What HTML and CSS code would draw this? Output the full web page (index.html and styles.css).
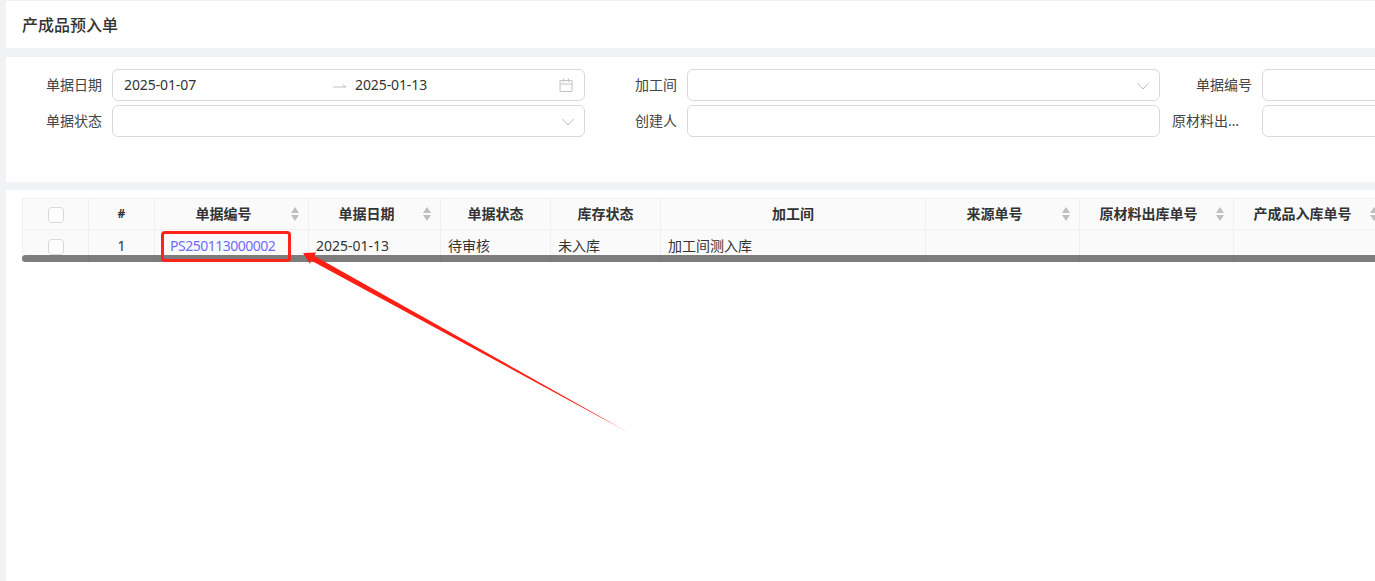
FILE: index.html
```html
<!DOCTYPE html>
<html lang="zh-CN">
<head>
<meta charset="utf-8">
<title>产成品预入单</title>
<link rel="stylesheet" href="styles.css">
</head>
<body>
<main class="page">
  <header class="card title-card"><h1 class="title">产成品预入单</h1></header>
  <section class="card filter-card">
    <form class="filter-grid">
      <div class="field">
        <label class="field-label">单据日期</label>
        <div class="control date-range">
          <span class="date-value">2025-01-07</span>
          <svg class="range-arrow" viewBox="0 0 14 6" width="14" height="6"><path d="M0 4h13L9.500 1.500" fill="none" stroke="#bfbfbf" stroke-width="1"/></svg>
          <span class="date-value">2025-01-13</span>
          <svg class="calendar" viewBox="0 0 14 14" width="14" height="14"><path d="M1 2.500h12v11H1zM1 6h12M4.500 .5v3.500M9.500 .5v3.500" fill="none" stroke="#c4c4c4" stroke-width="1"/></svg>
        </div>
      </div>
      <div class="field">
        <label class="field-label">加工间</label>
        <div class="control select">
          <svg class="chevron" viewBox="0 0 12 8" width="12" height="8"><path d="M.5 1l5.500 6 5.500-6" fill="none" stroke="#bfbfbf" stroke-width="1"/></svg>
        </div>
      </div>
      <div class="field">
        <label class="field-label">单据编号</label>
        <div class="control"></div>
      </div>
      <div class="field">
        <label class="field-label">单据状态</label>
        <div class="control select">
          <svg class="chevron" viewBox="0 0 12 8" width="12" height="8"><path d="M.5 1l5.500 6 5.500-6" fill="none" stroke="#bfbfbf" stroke-width="1"/></svg>
        </div>
      </div>
      <div class="field">
        <label class="field-label">创建人</label>
        <div class="control"></div>
      </div>
      <div class="field">
        <label class="field-label">原材料出库单号</label>
        <div class="control"></div>
      </div>
    </form>
  </section>
  <section class="card table-card">
    <div class="table-wrap">
      <table class="grid-table">
        <colgroup>
          <col class="w66"><col class="w66"><col class="w154"><col class="w132"><col class="w110"><col class="w110"><col class="w265"><col class="w154"><col class="w154"><col class="w154">
        </colgroup>
        <thead>
          <tr>
            <th><span class="checkbox"></span></th>
            <th class="hash">#</th>
            <th class="sortable">单据编号<span class="sorter"></span></th>
            <th class="sortable">单据日期<span class="sorter"></span></th>
            <th>单据状态</th>
            <th>库存状态</th>
            <th>加工间</th>
            <th class="sortable">来源单号<span class="sorter"></span></th>
            <th class="sortable">原材料出库单号<span class="sorter"></span></th>
            <th class="sortable">产成品入库单号<span class="sorter"></span></th>
          </tr>
        </thead>
        <tbody>
          <tr>
            <td class="center"><span class="checkbox"></span></td>
            <td class="center">1</td>
            <td class="link-cell"><a class="doc-link">PS250113000002</a></td>
            <td>2025-01-13</td>
            <td>待审核</td>
            <td>未入库</td>
            <td>加工间测入库</td>
            <td></td>
            <td></td>
            <td></td>
          </tr>
        </tbody>
      </table>
      <div class="scrollbar"></div>
    </div>
  </section>
</main>
<div class="highlight-box"></div>
<svg class="annotation" viewBox="0 0 1375 581" width="1375" height="581">
  <defs>
    <linearGradient id="fade" gradientUnits="userSpaceOnUse" x1="303" y1="253" x2="633" y2="435">
      <stop offset="0" stop-color="#ff1f14"/>
      <stop offset=".9" stop-color="#ff1f14"/>
      <stop offset="1" stop-color="#ff1f14" stop-opacity=".15"/>
    </linearGradient>
  </defs>
  <polygon points="303,253 316,252.500 314.500,256 633,435 311,260.500 310,264" fill="url(#fade)"/>
</svg>
</body>
</html>
```
FILE: styles.css
```css
* { box-sizing: border-box; }
html, body { margin: 0; height: 100%; overflow: hidden; }
body {
  background: #f0f2f5;
  color: #333;
  font-family: "Noto Sans", "Noto Sans CJK SC", sans-serif;
  font-size: 14px;
}
.page {
  height: 581px;
  padding: 1px 0 0 6px;
  display: flex;
  flex-direction: column;
  gap: 9px;
  overflow: hidden;
}
.card { background: #fff; overflow: hidden; flex: none; }
.title-card { height: 47px; padding-left: 16px; display: flex; align-items: center; }
.title { margin: 0; font-size: 16px; font-weight: 500; line-height: 22px; color: #333; }
.filter-card { height: 125px; padding: 12px 0 0 4px; margin-bottom: -1px; }
.filter-grid {
  display: grid;
  grid-template-columns: repeat(3, 575px);
  grid-auto-rows: 32px;
  row-gap: 4px;
  width: 1725px;
}
.field { display: flex; align-items: center; gap: 10px; }
.field-label {
  flex: none;
  width: 92px;
  padding-left: 12px;
  padding-bottom: 2px;
  text-align: right;
  white-space: nowrap;
  overflow: hidden;
  text-overflow: ellipsis;
  color: #444;
}
.control {
  width: 473px;
  height: 32px;
  border: 1px solid #d9d9d9;
  border-radius: 6px;
  background: #fff;
  display: flex;
  align-items: center;
  padding: 0 11px;
}
.select { justify-content: flex-end; }
.date-range { padding: 0 12px 0 11px; }
.date-value { flex: none; width: 201px; color: #333; line-height: 22px; letter-spacing: -.1px; }
.range-arrow { flex: none; margin: 2px 8px 0; }
.calendar { flex: none; margin-left: 3px; }
.chevron { display: block; margin: 2px -1px 0 0; }
.table-card { flex: 1; padding: 8px 0 0 16px; }
.table-wrap { position: relative; overflow: hidden; width: 1353px; height: 64px; }
.grid-table {
  table-layout: fixed;
  width: 1365px;
  border-collapse: separate;
  border-spacing: 0;
  border-top: 1px solid #f0f0f0;
  border-left: 1px solid #f0f0f0;
  background: #fafafa;
}
.w66 { width: 66px; }
.w110 { width: 110px; }
.w132 { width: 132px; }
.w154 { width: 154px; }
.w265 { width: 265px; }
.grid-table th, .grid-table td {
  border-right: 1px solid #f0f0f0;
  border-bottom: 1px solid #f0f0f0;
  padding: 0 7px;
  white-space: nowrap;
  font-size: 14px;
}
.grid-table th {
  height: 31px;
  padding-bottom: 2px;
  text-align: center;
  font-weight: 700;
  color: #333;
  position: relative;
}
.grid-table td { height: 33px; color: #333; padding-bottom: 2px; }
.grid-table .hash { font-size: 12px; }
.grid-table .sortable { padding-right: 23px; }
.grid-table .center { text-align: center; }
.grid-table .link-cell { padding-left: 15px; }
.doc-link { color: #6f6cff; letter-spacing: -.5px; }
.checkbox {
  display: inline-block;
  width: 16px;
  height: 16px;
  border: 1px solid #d9d9d9;
  border-radius: 4px;
  background: #fff;
  vertical-align: middle;
}
.sorter {
  position: absolute;
  right: 9px;
  top: 8px;
  width: 8px;
  height: 14px;
  display: flex;
  flex-direction: column;
  justify-content: space-between;
}
.sorter::before, .sorter::after {
  content: "";
  display: block;
  width: 0;
  height: 0;
  border-left: 4px solid transparent;
  border-right: 4px solid transparent;
}
.sorter::before { border-bottom: 6px solid #bfbfbf; }
.sorter::after { border-top: 6px solid #bfbfbf; }
.scrollbar {
  position: absolute;
  left: 0;
  right: 0;
  top: 57px;
  height: 7px;
  border-radius: 4px 0 0 4px;
  background: rgba(0, 0, 0, .5);
}
.highlight-box {
  position: absolute;
  left: 161px;
  top: 231px;
  width: 130px;
  height: 31px;
  border: 3px solid #ff2419;
  border-radius: 4px;
}
.annotation { position: absolute; left: 0; top: 0; pointer-events: none; }
```
